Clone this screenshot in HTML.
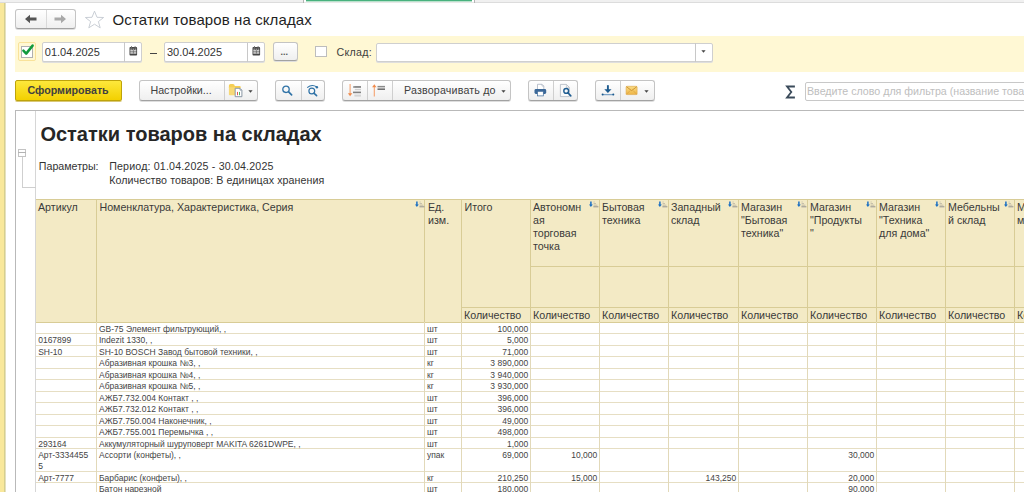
<!DOCTYPE html>
<html><head><meta charset="utf-8"><style>
html,body{margin:0;padding:0;}
body{width:1024px;height:492px;overflow:hidden;position:relative;background:#fff;font-family:"Liberation Sans", sans-serif;}
</style></head><body>
<div style="position:absolute;left:0px;top:0px;width:4px;height:492px;background:#f9e89b;"></div>
<div style="position:absolute;left:4px;top:0px;width:1px;height:492px;background:#d6cf8f;"></div>
<div style="position:absolute;left:5px;top:0px;width:1px;height:492px;background:#e6e1bd;"></div>
<div style="position:absolute;left:0px;top:0px;width:1024px;height:2px;background:#f0f0f0;"></div>
<div style="position:absolute;left:0px;top:2px;width:1024px;height:1px;background:#dcdcdc;"></div>
<div style="position:absolute;left:303px;top:0px;width:1px;height:3px;background:#b5b5b5;"></div>
<div style="position:absolute;left:304px;top:0px;width:170px;height:2px;background:#fff;"></div>
<div style="position:absolute;left:304px;top:2px;width:170px;height:1px;background:#e8e8e8;"></div>
<div style="position:absolute;left:474px;top:0px;width:1px;height:3px;background:#b5b5b5;"></div>
<div style="position:absolute;left:306px;top:0px;width:166px;height:1px;background:#48b17e;"></div>
<div style="position:absolute;left:306px;top:1px;width:166px;height:1px;background:#b9e2cc;"></div>
<div style="position:absolute;left:15px;top:9px;width:61px;height:20px;background:linear-gradient(#ffffff,#efefef);border:1px solid #c4c4c4;border-bottom-color:#a2a2a2;border-radius:3px;box-shadow:0 1px 0 #dedede;box-sizing:border-box;"></div>
<div style="position:absolute;left:45.5px;top:10px;width:1px;height:18px;background:#d9d9d9;"></div>
<svg style="position:absolute;left:24px;top:14.3px" width="14" height="10" viewBox="0 0 14 10"><path d="M1 5 L6 0.8 L6 3.6 L12.5 3.6 L12.5 6.4 L6 6.4 L6 9.2 Z" fill="#555"/></svg>
<svg style="position:absolute;left:53px;top:14.3px" width="14" height="10" viewBox="0 0 14 10"><path d="M13 5 L8 0.8 L8 3.6 L1.5 3.6 L1.5 6.4 L8 6.4 L8 9.2 Z" fill="#a9a9a9"/></svg>
<svg style="position:absolute;left:84px;top:10px" width="21" height="19" viewBox="0 0 21 19"><path d="M10.5 1.2 L13 7.3 L19.6 7.5 L14.4 11.6 L16.2 17.8 L10.5 14.2 L4.8 17.8 L6.6 11.6 L1.4 7.5 L8 7.3 Z" fill="none" stroke="#c3c8d0" stroke-width="0.9"/></svg>
<div style="position:absolute;left:112.60px;top:12.00px;font-size:15px;line-height:15px;white-space:pre;color:#1f1f1f;letter-spacing:0.1px;">Остатки товаров на складах</div>
<div style="position:absolute;left:15px;top:36px;width:1009px;height:36px;background:#fff8d4;"></div>
<div style="position:absolute;left:18px;top:42px;width:18px;height:18.5px;border:1.5px solid #f9e29a;border-radius:2px;box-sizing:border-box;background:#fff8d4;"></div>
<div style="position:absolute;left:21px;top:45.5px;width:12px;height:12px;border:1px solid #b0b0b0;box-sizing:border-box;background:#fff;"></div>
<svg style="position:absolute;left:21px;top:43px" width="14" height="14" viewBox="0 0 14 14"><path d="M2.4 7.6 L5.2 10.6 L11.6 2.6" fill="none" stroke="#119a3c" stroke-width="2.5" stroke-linecap="round" stroke-linejoin="round"/></svg>
<div style="position:absolute;left:42px;top:42px;width:99.5px;height:19.5px;background:#fff;border:1px solid #cfcfcf;border-radius:2px;box-shadow:0 1px 0 #dedede;box-sizing:border-box;"></div>
<div style="position:absolute;left:124px;top:42px;width:1px;height:19.5px;background:#c8c8c8;"></div>
<div style="position:absolute;left:44.80px;top:47.19px;font-size:11px;line-height:11px;white-space:pre;color:#333;">01.04.2025</div>
<svg style="position:absolute;left:129.0px;top:45.5px" width="9" height="10" viewBox="0 0 9 10"><rect x="0.5" y="1" width="7.6" height="8.5" rx="0.9" fill="#464646"/><rect x="1.4" y="2.7" width="1.5" height="0.9" fill="#c9c9c9"/><rect x="3.55" y="2.7" width="1.5" height="0.9" fill="#c9c9c9"/><rect x="5.7" y="2.7" width="1.5" height="0.9" fill="#c9c9c9"/><rect x="1.3" y="4.2" width="6" height="1.3" fill="#f2f2f2"/><rect x="1.3" y="6.3" width="6" height="1.3" fill="#f2f2f2"/><rect x="3.9" y="4.2" width="0.8" height="3.4" fill="#6a6a6a"/><rect x="2" y="0" width="1" height="1.5" fill="#888"/><rect x="5.6" y="0" width="1" height="1.5" fill="#888"/></svg>
<div style="position:absolute;left:150px;top:52.5px;width:6.5px;height:1.2px;background:#444;"></div>
<div style="position:absolute;left:164px;top:42px;width:100.5px;height:19.5px;background:#fff;border:1px solid #cfcfcf;border-radius:2px;box-shadow:0 1px 0 #dedede;box-sizing:border-box;"></div>
<div style="position:absolute;left:247px;top:42.5px;width:1px;height:19px;background:#c8c8c8;"></div>
<div style="position:absolute;left:167.00px;top:47.19px;font-size:11px;line-height:11px;white-space:pre;color:#333;">30.04.2025</div>
<svg style="position:absolute;left:252.0px;top:45.5px" width="9" height="10" viewBox="0 0 9 10"><rect x="0.5" y="1" width="7.6" height="8.5" rx="0.9" fill="#464646"/><rect x="1.4" y="2.7" width="1.5" height="0.9" fill="#c9c9c9"/><rect x="3.55" y="2.7" width="1.5" height="0.9" fill="#c9c9c9"/><rect x="5.7" y="2.7" width="1.5" height="0.9" fill="#c9c9c9"/><rect x="1.3" y="4.2" width="6" height="1.3" fill="#f2f2f2"/><rect x="1.3" y="6.3" width="6" height="1.3" fill="#f2f2f2"/><rect x="3.9" y="4.2" width="0.8" height="3.4" fill="#6a6a6a"/><rect x="2" y="0" width="1" height="1.5" fill="#888"/><rect x="5.6" y="0" width="1" height="1.5" fill="#888"/></svg>
<div style="position:absolute;left:273px;top:41.5px;width:24.5px;height:19.5px;background:linear-gradient(#ffffff,#efefef);border:1px solid #c4c4c4;border-bottom-color:#a2a2a2;border-radius:3px;box-shadow:0 1px 0 #dedede;box-sizing:border-box;"></div>
<div style="position:absolute;left:280.50px;top:47.98px;font-size:9px;line-height:9px;white-space:pre;color:#555;font-weight:bold;">...</div>
<div style="position:absolute;left:315.3px;top:45.7px;width:11.8px;height:11.8px;border:1px solid #bdbdbd;box-sizing:border-box;background:#fff;"></div>
<div style="position:absolute;left:336.50px;top:46.77px;font-size:10.67px;line-height:10.67px;white-space:pre;color:#404040;letter-spacing:0.3px;">Склад:</div>
<div style="position:absolute;left:375.5px;top:42.6px;width:337px;height:19px;background:#fff;border:1px solid #cfcfcf;border-radius:2px;box-shadow:0 1px 0 #dedede;box-sizing:border-box;"></div>
<div style="position:absolute;left:695px;top:42.6px;width:1px;height:19px;background:#c8c8c8;"></div>
<svg style="position:absolute;left:701.25px;top:49.5px" width="5" height="3" viewBox="0 0 5 3"><path d="M0.4 0.3 L4.6 0.3 L2.5 2.8 Z" fill="#444"/></svg>
<div style="position:absolute;left:15px;top:80px;width:106.6px;height:20.7px;background:linear-gradient(#fde83c,#f3d000);border:1px solid #bea30a;border-radius:2px;box-sizing:border-box;box-shadow:0 1px 0 #d9c877;"></div>
<div style="position:absolute;left:27.50px;top:84.87px;font-size:10.67px;line-height:10.67px;white-space:pre;color:#404040;font-weight:bold;">Сформировать</div>
<div style="position:absolute;left:138.5px;top:80.3px;width:119.5px;height:20.5px;background:linear-gradient(#ffffff,#efefef);border:1px solid #c4c4c4;border-bottom-color:#a2a2a2;border-radius:3px;box-shadow:0 1px 0 #dedede;box-sizing:border-box;"></div>
<div style="position:absolute;left:224px;top:81.3px;width:1px;height:18.5px;background:#cfcfcf;"></div>
<div style="position:absolute;left:150.50px;top:85.37px;font-size:10.67px;line-height:10.67px;white-space:pre;color:#404040;">Настройки...</div>
<svg style="position:absolute;left:228px;top:83px" width="16" height="15" viewBox="0 0 16 15"><path d="M0.9 2.6 Q0.9 0.9 2.6 0.9 L5 0.9 Q6.6 0.9 6.8 3 L11.6 3 Q12.7 3 12.7 4 L12.7 5 L0.9 5 Z" fill="#f5cf55"/><path d="M0.9 4.2 L7 4.2 L7 12.2 L1.8 12.2 Q0.9 12.2 0.9 11.3 Z" fill="#f7d976"/><path d="M7.2 5.3 L12 5.3 L13.9 7.2 L13.9 13.7 L7.2 13.7 Z" fill="#fff" stroke="#7e8b9b" stroke-width="0.9"/><path d="M12 5.3 L12 7.2 L13.9 7.2" fill="#c9d0d8" stroke="#7e8b9b" stroke-width="0.6"/><rect x="9" y="8.9" width="0.9" height="3.3" fill="#e0463c"/><rect x="11" y="8.9" width="0.9" height="3.3" fill="#3fae4f"/></svg>
<svg style="position:absolute;left:247.7px;top:90.1px" width="5" height="3" viewBox="0 0 5 3"><path d="M0.4 0.3 L4.6 0.3 L2.5 2.8 Z" fill="#444"/></svg>
<div style="position:absolute;left:275px;top:80.3px;width:49.69999999999999px;height:20.5px;background:linear-gradient(#ffffff,#efefef);border:1px solid #c4c4c4;border-bottom-color:#a2a2a2;border-radius:3px;box-shadow:0 1px 0 #dedede;box-sizing:border-box;"></div>
<div style="position:absolute;left:300.6px;top:81.3px;width:1px;height:18.5px;background:#cfcfcf;"></div>
<svg style="position:absolute;left:280px;top:83px" width="14" height="14" viewBox="0 0 14 14"><circle cx="6" cy="6.3" r="3.2" fill="none" stroke="#2f72a6" stroke-width="1.3"/><path d="M8.4 8.7 L11.6 11.8" stroke="#2f72a6" stroke-width="1.7" stroke-linecap="round"/></svg>
<svg style="position:absolute;left:305px;top:83px" width="16" height="14" viewBox="0 0 16 14"><circle cx="6.8" cy="8" r="2.9" fill="none" stroke="#2f72a6" stroke-width="1.2"/><path d="M8.9 10.2 L11.6 12.6" stroke="#2f72a6" stroke-width="1.6" stroke-linecap="round"/><path d="M2.2 4.6 Q7 0.8 11.8 4" fill="none" stroke="#2f72a6" stroke-width="1.1"/><circle cx="11.9" cy="4.2" r="1.2" fill="#2f72a6"/></svg>
<div style="position:absolute;left:342px;top:80.3px;width:169px;height:20.5px;background:linear-gradient(#ffffff,#efefef);border:1px solid #c4c4c4;border-bottom-color:#a2a2a2;border-radius:3px;box-shadow:0 1px 0 #dedede;box-sizing:border-box;"></div>
<div style="position:absolute;left:367px;top:81.3px;width:1px;height:18.5px;background:#cfcfcf;"></div>
<div style="position:absolute;left:392px;top:81.3px;width:1px;height:18.5px;background:#cfcfcf;"></div>
<svg style="position:absolute;left:346px;top:83px" width="16" height="15" viewBox="0 0 16 15"><path d="M4.1 1 L4.1 11" stroke="#f5a270" stroke-width="1.1"/><path d="M1.9 10.3 L6.3 10.3 L4.1 13.2 Z" fill="#f08a4b"/><rect x="7" y="3.1" width="8" height="1.7" fill="#808080"/><rect x="7" y="3.1" width="1.3" height="1.7" fill="#b5b5b5"/><rect x="8.8" y="5.9" width="6.2" height="1.3" fill="#cfcfcf"/><rect x="7" y="8.6" width="8" height="1.6" fill="#808080"/><rect x="8.4" y="11.6" width="6.6" height="2" fill="#d5d5d5"/></svg>
<svg style="position:absolute;left:370px;top:83px" width="16" height="15" viewBox="0 0 16 15"><path d="M4.3 3.5 L4.3 13.5" stroke="#f5a270" stroke-width="1.1"/><path d="M2.1 4.2 L6.5 4.2 L4.3 1.2 Z" fill="#f08a4b"/><rect x="7.5" y="2.9" width="7.5" height="1.5" fill="#8a8a8a"/><rect x="7.5" y="5.5" width="7.5" height="1.3" fill="#505050"/></svg>
<div style="position:absolute;left:404.00px;top:85.37px;font-size:10.67px;line-height:10.67px;white-space:pre;color:#404040;letter-spacing:0.18px;">Разворачивать до</div>
<svg style="position:absolute;left:500.8px;top:90.1px" width="5" height="3" viewBox="0 0 5 3"><path d="M0.4 0.3 L4.6 0.3 L2.5 2.8 Z" fill="#444"/></svg>
<div style="position:absolute;left:528.4px;top:80.3px;width:49.39999999999998px;height:20.5px;background:linear-gradient(#ffffff,#efefef);border:1px solid #c4c4c4;border-bottom-color:#a2a2a2;border-radius:3px;box-shadow:0 1px 0 #dedede;box-sizing:border-box;"></div>
<div style="position:absolute;left:553.4px;top:81.3px;width:1px;height:18.5px;background:#cfcfcf;"></div>
<svg style="position:absolute;left:533px;top:83px" width="15" height="15" viewBox="0 0 15 15"><path d="M4.5 1.3 L9 1.3 L10.8 3.1 L10.8 6.5 L4.5 6.5 Z" fill="#fff" stroke="#a9b3c0" stroke-width="0.8"/><path d="M9 1.3 L9 3.1 L10.8 3.1" fill="none" stroke="#a9b3c0" stroke-width="0.6"/><rect x="1.5" y="6" width="11.7" height="5" rx="1.4" fill="#3b6898"/><rect x="4.4" y="8.3" width="5.9" height="4.6" fill="#fff" stroke="#3b6898" stroke-width="0.7"/></svg>
<svg style="position:absolute;left:558px;top:83px" width="15" height="15" viewBox="0 0 15 15"><path d="M2.4 1.4 L8.4 1.4 L11.3 4.3 L11.3 13.6 L2.4 13.6 Z" fill="#fafafa" stroke="#b0b8c2" stroke-width="0.8"/><path d="M8.4 1.4 L8.4 4.3 L11.3 4.3" fill="none" stroke="#b0b8c2" stroke-width="0.6"/><circle cx="8.2" cy="7.9" r="2.4" fill="none" stroke="#1f5d91" stroke-width="1.4"/><path d="M9.9 9.7 L12.8 12.9" stroke="#1f5d91" stroke-width="1.6" stroke-linecap="round"/></svg>
<div style="position:absolute;left:595px;top:80.3px;width:59.5px;height:20.5px;background:linear-gradient(#ffffff,#efefef);border:1px solid #c4c4c4;border-bottom-color:#a2a2a2;border-radius:3px;box-shadow:0 1px 0 #dedede;box-sizing:border-box;"></div>
<div style="position:absolute;left:620px;top:81.3px;width:1px;height:18.5px;background:#cfcfcf;"></div>
<svg style="position:absolute;left:601px;top:84px" width="14" height="13" viewBox="0 0 14 13"><path d="M6.9 1.2 L6.9 6.5" stroke="#1c5a8e" stroke-width="1.9"/><path d="M3.3 5.2 L10.5 5.2 L6.9 9 Z" fill="#1c5a8e"/><path d="M1.6 10.6 L12.3 10.6" stroke="#7da3c6" stroke-width="1.3"/><circle cx="1.6" cy="10.6" r="1" fill="#1c5a8e"/><circle cx="12.3" cy="10.6" r="1" fill="#1c5a8e"/></svg>
<svg style="position:absolute;left:625px;top:85px" width="14" height="11" viewBox="0 0 14 11"><defs><linearGradient id="mg" x1="0" y1="0" x2="0" y2="1"><stop offset="0" stop-color="#f9dc85"/><stop offset="1" stop-color="#eeb445"/></linearGradient></defs><rect x="1.1" y="1.3" width="11" height="8.3" rx="0.9" fill="url(#mg)" stroke="#dca445" stroke-width="0.6"/><path d="M1.4 1.7 L6.6 5.6 L11.8 1.7" fill="none" stroke="#c99030" stroke-width="0.9"/><path d="M1.4 9.3 L5.2 5.5 M11.8 9.3 L8 5.5" fill="none" stroke="#d8a040" stroke-width="0.7"/></svg>
<svg style="position:absolute;left:643.9px;top:90.1px" width="5" height="3" viewBox="0 0 5 3"><path d="M0.4 0.3 L4.6 0.3 L2.5 2.8 Z" fill="#444"/></svg>
<svg style="position:absolute;left:785px;top:85px" width="11" height="14" viewBox="0 0 11 14"><path d="M9.9 1.5 L2 1.5 L6.3 7 L2 12.5 L9.9 12.5" fill="none" stroke="#3a4a5a" stroke-width="1.8" stroke-linejoin="miter"/></svg>
<div style="position:absolute;left:805.4px;top:82px;width:230px;height:18.6px;background:#fff;border:1px solid #c8c8c8;border-radius:2px;box-sizing:border-box;"></div>
<div style="position:absolute;left:807.00px;top:86.47px;font-size:10.67px;line-height:10.67px;white-space:pre;color:#bebebe;">Введите слово для фильтра (название товара</div>
<div style="position:absolute;left:15px;top:110px;width:1009px;height:1px;background:#b9b9b9;"></div>
<div style="position:absolute;left:15px;top:110px;width:1px;height:382px;background:#b9b9b9;"></div>
<div style="position:absolute;left:35px;top:111px;width:1px;height:381px;background:#d6d6d6;"></div>
<div style="position:absolute;left:18px;top:148.5px;width:7.5px;height:8.5px;border:1px solid #c3c3c3;box-sizing:border-box;background:#fff;"></div>
<div style="position:absolute;left:18px;top:152px;width:7.5px;height:1px;background:#b3b3b3;"></div>
<div style="position:absolute;left:21.5px;top:156.5px;width:1px;height:31px;background:#cfcfcf;"></div>
<div style="position:absolute;left:21.5px;top:187px;width:14px;height:1px;background:#cfcfcf;"></div>
<div style="position:absolute;left:40.40px;top:123.67px;font-size:20px;line-height:20px;white-space:pre;color:#262626;font-weight:bold;">Остатки товаров на складах</div>
<div style="position:absolute;left:38.80px;top:160.97px;font-size:10.67px;line-height:10.67px;white-space:pre;color:#333;">Параметры:</div>
<div style="position:absolute;left:109.20px;top:160.97px;font-size:10.67px;line-height:10.67px;white-space:pre;color:#333;letter-spacing:0.16px;">Период: 01.04.2025 - 30.04.2025</div>
<div style="position:absolute;left:109.20px;top:175.37px;font-size:10.67px;line-height:10.67px;white-space:pre;color:#333;letter-spacing:0.07px;">Количество товаров: В единицах хранения</div>
<div style="position:absolute;left:36px;top:199px;width:988px;height:123px;background:#f3eac5;"></div>
<div style="position:absolute;left:36px;top:199px;width:988px;height:1px;background:#d8cc96;"></div>
<div style="position:absolute;left:530.6px;top:266px;width:493.4px;height:1px;background:#d8cc96;"></div>
<div style="position:absolute;left:461.6px;top:307px;width:562.4px;height:1px;background:#d8cc96;"></div>
<div style="position:absolute;left:36px;top:322px;width:988px;height:1px;background:#d8cc96;"></div>
<div style="position:absolute;left:36px;top:333px;width:988px;height:1px;background:#e6dec3;"></div>
<div style="position:absolute;left:36px;top:345px;width:988px;height:1px;background:#e6dec3;"></div>
<div style="position:absolute;left:36px;top:356px;width:988px;height:1px;background:#e6dec3;"></div>
<div style="position:absolute;left:36px;top:368px;width:988px;height:1px;background:#e6dec3;"></div>
<div style="position:absolute;left:36px;top:379px;width:988px;height:1px;background:#e6dec3;"></div>
<div style="position:absolute;left:36px;top:391px;width:988px;height:1px;background:#e6dec3;"></div>
<div style="position:absolute;left:36px;top:402px;width:988px;height:1px;background:#e6dec3;"></div>
<div style="position:absolute;left:36px;top:414px;width:988px;height:1px;background:#e6dec3;"></div>
<div style="position:absolute;left:36px;top:425px;width:988px;height:1px;background:#e6dec3;"></div>
<div style="position:absolute;left:36px;top:437px;width:988px;height:1px;background:#e6dec3;"></div>
<div style="position:absolute;left:36px;top:448px;width:988px;height:1px;background:#e6dec3;"></div>
<div style="position:absolute;left:36px;top:471px;width:988px;height:1px;background:#e6dec3;"></div>
<div style="position:absolute;left:36px;top:482px;width:988px;height:1px;background:#e6dec3;"></div>
<div style="position:absolute;left:36px;top:493px;width:988px;height:1px;background:#e6dec3;"></div>
<div style="position:absolute;left:96px;top:199px;width:1px;height:123px;background:#d8cc96;"></div>
<div style="position:absolute;left:96px;top:322px;width:1px;height:170px;background:#e2d9b9;"></div>
<div style="position:absolute;left:424px;top:199px;width:1px;height:123px;background:#d8cc96;"></div>
<div style="position:absolute;left:424px;top:322px;width:1px;height:170px;background:#e2d9b9;"></div>
<div style="position:absolute;left:461px;top:199px;width:1px;height:123px;background:#d8cc96;"></div>
<div style="position:absolute;left:461px;top:322px;width:1px;height:170px;background:#e2d9b9;"></div>
<div style="position:absolute;left:530px;top:199px;width:1px;height:123px;background:#d8cc96;"></div>
<div style="position:absolute;left:530px;top:322px;width:1px;height:170px;background:#e2d9b9;"></div>
<div style="position:absolute;left:599px;top:199px;width:1px;height:123px;background:#d8cc96;"></div>
<div style="position:absolute;left:599px;top:322px;width:1px;height:170px;background:#e2d9b9;"></div>
<div style="position:absolute;left:668px;top:199px;width:1px;height:123px;background:#d8cc96;"></div>
<div style="position:absolute;left:668px;top:322px;width:1px;height:170px;background:#e2d9b9;"></div>
<div style="position:absolute;left:738px;top:199px;width:1px;height:123px;background:#d8cc96;"></div>
<div style="position:absolute;left:738px;top:322px;width:1px;height:170px;background:#e2d9b9;"></div>
<div style="position:absolute;left:807px;top:199px;width:1px;height:123px;background:#d8cc96;"></div>
<div style="position:absolute;left:807px;top:322px;width:1px;height:170px;background:#e2d9b9;"></div>
<div style="position:absolute;left:876px;top:199px;width:1px;height:123px;background:#d8cc96;"></div>
<div style="position:absolute;left:876px;top:322px;width:1px;height:170px;background:#e2d9b9;"></div>
<div style="position:absolute;left:945px;top:199px;width:1px;height:123px;background:#d8cc96;"></div>
<div style="position:absolute;left:945px;top:322px;width:1px;height:170px;background:#e2d9b9;"></div>
<div style="position:absolute;left:1014px;top:199px;width:1px;height:123px;background:#d8cc96;"></div>
<div style="position:absolute;left:1014px;top:322px;width:1px;height:170px;background:#e2d9b9;"></div>
<div style="position:absolute;left:38.00px;top:201.97px;font-size:10.67px;line-height:10.67px;white-space:pre;color:#3a3a3a;">Артикул</div>
<div style="position:absolute;left:99.50px;top:201.97px;font-size:10.67px;line-height:10.67px;white-space:pre;color:#3a3a3a;">Номенклатура, Характеристика, Серия</div>
<div style="position:absolute;left:428.00px;top:201.97px;font-size:10.67px;line-height:10.67px;white-space:pre;color:#3a3a3a;">Ед.</div>
<div style="position:absolute;left:428.00px;top:214.97px;font-size:10.67px;line-height:10.67px;white-space:pre;color:#3a3a3a;">изм.</div>
<div style="position:absolute;left:464.50px;top:201.97px;font-size:10.67px;line-height:10.67px;white-space:pre;color:#3a3a3a;">Итого</div>
<div style="position:absolute;left:533.00px;top:201.97px;font-size:10.67px;line-height:10.67px;white-space:pre;color:#3a3a3a;">Автономн</div>
<div style="position:absolute;left:533.00px;top:214.97px;font-size:10.67px;line-height:10.67px;white-space:pre;color:#3a3a3a;">ая</div>
<div style="position:absolute;left:533.00px;top:227.97px;font-size:10.67px;line-height:10.67px;white-space:pre;color:#3a3a3a;">торговая</div>
<div style="position:absolute;left:533.00px;top:240.97px;font-size:10.67px;line-height:10.67px;white-space:pre;color:#3a3a3a;">точка</div>
<div style="position:absolute;left:602.00px;top:201.97px;font-size:10.67px;line-height:10.67px;white-space:pre;color:#3a3a3a;">Бытовая</div>
<div style="position:absolute;left:602.00px;top:214.97px;font-size:10.67px;line-height:10.67px;white-space:pre;color:#3a3a3a;">техника</div>
<div style="position:absolute;left:671.00px;top:201.97px;font-size:10.67px;line-height:10.67px;white-space:pre;color:#3a3a3a;">Западный</div>
<div style="position:absolute;left:671.00px;top:214.97px;font-size:10.67px;line-height:10.67px;white-space:pre;color:#3a3a3a;">склад</div>
<div style="position:absolute;left:741.00px;top:201.97px;font-size:10.67px;line-height:10.67px;white-space:pre;color:#3a3a3a;">Магазин</div>
<div style="position:absolute;left:741.00px;top:214.97px;font-size:10.67px;line-height:10.67px;white-space:pre;color:#3a3a3a;">"Бытовая</div>
<div style="position:absolute;left:741.00px;top:227.97px;font-size:10.67px;line-height:10.67px;white-space:pre;color:#3a3a3a;">техника"</div>
<div style="position:absolute;left:810.00px;top:201.97px;font-size:10.67px;line-height:10.67px;white-space:pre;color:#3a3a3a;">Магазин</div>
<div style="position:absolute;left:810.00px;top:214.97px;font-size:10.67px;line-height:10.67px;white-space:pre;color:#3a3a3a;">"Продукты</div>
<div style="position:absolute;left:810.00px;top:227.97px;font-size:10.67px;line-height:10.67px;white-space:pre;color:#3a3a3a;">"</div>
<div style="position:absolute;left:879.00px;top:201.97px;font-size:10.67px;line-height:10.67px;white-space:pre;color:#3a3a3a;">Магазин</div>
<div style="position:absolute;left:879.00px;top:214.97px;font-size:10.67px;line-height:10.67px;white-space:pre;color:#3a3a3a;">"Техника</div>
<div style="position:absolute;left:879.00px;top:227.97px;font-size:10.67px;line-height:10.67px;white-space:pre;color:#3a3a3a;">для дома"</div>
<div style="position:absolute;left:948.00px;top:201.97px;font-size:10.67px;line-height:10.67px;white-space:pre;color:#3a3a3a;">Мебельны</div>
<div style="position:absolute;left:948.00px;top:214.97px;font-size:10.67px;line-height:10.67px;white-space:pre;color:#3a3a3a;">й склад</div>
<div style="position:absolute;left:1017.00px;top:201.97px;font-size:10.67px;line-height:10.67px;white-space:pre;color:#3a3a3a;">Магазин</div>
<div style="position:absolute;left:1017.00px;top:214.97px;font-size:10.67px;line-height:10.67px;white-space:pre;color:#3a3a3a;">мебели</div>
<svg style="position:absolute;left:415px;top:201px" width="10" height="7" viewBox="0 0 10 7"><path d="M1.9 0.6 L1.9 4" stroke="#1b6fc2" stroke-width="1.5"/><path d="M0 3.4 L3.8 3.4 L1.9 6.1 Z" fill="#1b6fc2"/><path d="M4.6 1 L5.6 1 M4.6 2.6 L7 2.6 M4.6 4.2 L8.4 4.2" stroke="#b5b0a0" stroke-width="0.8"/><path d="M4.4 5.8 L9.4 5.8" stroke="#888" stroke-width="0.9"/></svg>
<svg style="position:absolute;left:589px;top:201px" width="10" height="7" viewBox="0 0 10 7"><path d="M1.9 0.6 L1.9 4" stroke="#1b6fc2" stroke-width="1.5"/><path d="M0 3.4 L3.8 3.4 L1.9 6.1 Z" fill="#1b6fc2"/><path d="M4.6 1 L5.6 1 M4.6 2.6 L7 2.6 M4.6 4.2 L8.4 4.2" stroke="#b5b0a0" stroke-width="0.8"/><path d="M4.4 5.8 L9.4 5.8" stroke="#888" stroke-width="0.9"/></svg>
<svg style="position:absolute;left:658px;top:201px" width="10" height="7" viewBox="0 0 10 7"><path d="M1.9 0.6 L1.9 4" stroke="#1b6fc2" stroke-width="1.5"/><path d="M0 3.4 L3.8 3.4 L1.9 6.1 Z" fill="#1b6fc2"/><path d="M4.6 1 L5.6 1 M4.6 2.6 L7 2.6 M4.6 4.2 L8.4 4.2" stroke="#b5b0a0" stroke-width="0.8"/><path d="M4.4 5.8 L9.4 5.8" stroke="#888" stroke-width="0.9"/></svg>
<svg style="position:absolute;left:728px;top:201px" width="10" height="7" viewBox="0 0 10 7"><path d="M1.9 0.6 L1.9 4" stroke="#1b6fc2" stroke-width="1.5"/><path d="M0 3.4 L3.8 3.4 L1.9 6.1 Z" fill="#1b6fc2"/><path d="M4.6 1 L5.6 1 M4.6 2.6 L7 2.6 M4.6 4.2 L8.4 4.2" stroke="#b5b0a0" stroke-width="0.8"/><path d="M4.4 5.8 L9.4 5.8" stroke="#888" stroke-width="0.9"/></svg>
<svg style="position:absolute;left:797px;top:201px" width="10" height="7" viewBox="0 0 10 7"><path d="M1.9 0.6 L1.9 4" stroke="#1b6fc2" stroke-width="1.5"/><path d="M0 3.4 L3.8 3.4 L1.9 6.1 Z" fill="#1b6fc2"/><path d="M4.6 1 L5.6 1 M4.6 2.6 L7 2.6 M4.6 4.2 L8.4 4.2" stroke="#b5b0a0" stroke-width="0.8"/><path d="M4.4 5.8 L9.4 5.8" stroke="#888" stroke-width="0.9"/></svg>
<svg style="position:absolute;left:866px;top:201px" width="10" height="7" viewBox="0 0 10 7"><path d="M1.9 0.6 L1.9 4" stroke="#1b6fc2" stroke-width="1.5"/><path d="M0 3.4 L3.8 3.4 L1.9 6.1 Z" fill="#1b6fc2"/><path d="M4.6 1 L5.6 1 M4.6 2.6 L7 2.6 M4.6 4.2 L8.4 4.2" stroke="#b5b0a0" stroke-width="0.8"/><path d="M4.4 5.8 L9.4 5.8" stroke="#888" stroke-width="0.9"/></svg>
<svg style="position:absolute;left:935px;top:201px" width="10" height="7" viewBox="0 0 10 7"><path d="M1.9 0.6 L1.9 4" stroke="#1b6fc2" stroke-width="1.5"/><path d="M0 3.4 L3.8 3.4 L1.9 6.1 Z" fill="#1b6fc2"/><path d="M4.6 1 L5.6 1 M4.6 2.6 L7 2.6 M4.6 4.2 L8.4 4.2" stroke="#b5b0a0" stroke-width="0.8"/><path d="M4.4 5.8 L9.4 5.8" stroke="#888" stroke-width="0.9"/></svg>
<svg style="position:absolute;left:1004px;top:201px" width="10" height="7" viewBox="0 0 10 7"><path d="M1.9 0.6 L1.9 4" stroke="#1b6fc2" stroke-width="1.5"/><path d="M0 3.4 L3.8 3.4 L1.9 6.1 Z" fill="#1b6fc2"/><path d="M4.6 1 L5.6 1 M4.6 2.6 L7 2.6 M4.6 4.2 L8.4 4.2" stroke="#b5b0a0" stroke-width="0.8"/><path d="M4.4 5.8 L9.4 5.8" stroke="#888" stroke-width="0.9"/></svg>
<div style="position:absolute;left:464.00px;top:309.87px;font-size:10.67px;line-height:10.67px;white-space:pre;color:#3a3a3a;">Количество</div>
<div style="position:absolute;left:533.00px;top:309.87px;font-size:10.67px;line-height:10.67px;white-space:pre;color:#3a3a3a;">Количество</div>
<div style="position:absolute;left:602.00px;top:309.87px;font-size:10.67px;line-height:10.67px;white-space:pre;color:#3a3a3a;">Количество</div>
<div style="position:absolute;left:671.00px;top:309.87px;font-size:10.67px;line-height:10.67px;white-space:pre;color:#3a3a3a;">Количество</div>
<div style="position:absolute;left:741.00px;top:309.87px;font-size:10.67px;line-height:10.67px;white-space:pre;color:#3a3a3a;">Количество</div>
<div style="position:absolute;left:810.00px;top:309.87px;font-size:10.67px;line-height:10.67px;white-space:pre;color:#3a3a3a;">Количество</div>
<div style="position:absolute;left:879.00px;top:309.87px;font-size:10.67px;line-height:10.67px;white-space:pre;color:#3a3a3a;">Количество</div>
<div style="position:absolute;left:948.00px;top:309.87px;font-size:10.67px;line-height:10.67px;white-space:pre;color:#3a3a3a;">Количество</div>
<div style="position:absolute;left:1017.00px;top:309.87px;font-size:10.67px;line-height:10.67px;white-space:pre;color:#3a3a3a;">Количество</div>
<div style="position:absolute;left:99.00px;top:324.80px;font-size:8.5px;line-height:8.5px;white-space:pre;color:#444;">GB-75 Элемент фильтрующий, ,</div>
<div style="position:absolute;left:427.00px;top:324.80px;font-size:8.5px;line-height:8.5px;white-space:pre;color:#444;">шт</div>
<div style="position:absolute;left:461px;top:324.80px;width:67.20px;text-align:right;font-size:8.5px;line-height:8.5px;white-space:pre;color:#444;">100,000</div>
<div style="position:absolute;left:38.20px;top:335.80px;font-size:8.5px;line-height:8.5px;white-space:pre;color:#444;">0167899</div>
<div style="position:absolute;left:99.00px;top:335.80px;font-size:8.5px;line-height:8.5px;white-space:pre;color:#444;">Indezit 1330, ,</div>
<div style="position:absolute;left:427.00px;top:335.80px;font-size:8.5px;line-height:8.5px;white-space:pre;color:#444;">шт</div>
<div style="position:absolute;left:461px;top:335.80px;width:67.20px;text-align:right;font-size:8.5px;line-height:8.5px;white-space:pre;color:#444;">5,000</div>
<div style="position:absolute;left:38.20px;top:347.80px;font-size:8.5px;line-height:8.5px;white-space:pre;color:#444;">SH-10</div>
<div style="position:absolute;left:99.00px;top:347.80px;font-size:8.5px;line-height:8.5px;white-space:pre;color:#444;">SH-10 BOSCH Завод бытовой техники, ,</div>
<div style="position:absolute;left:427.00px;top:347.80px;font-size:8.5px;line-height:8.5px;white-space:pre;color:#444;">шт</div>
<div style="position:absolute;left:461px;top:347.80px;width:67.20px;text-align:right;font-size:8.5px;line-height:8.5px;white-space:pre;color:#444;">71,000</div>
<div style="position:absolute;left:99.00px;top:358.80px;font-size:8.5px;line-height:8.5px;white-space:pre;color:#444;">Абразивная крошка №3, ,</div>
<div style="position:absolute;left:427.00px;top:358.80px;font-size:8.5px;line-height:8.5px;white-space:pre;color:#444;">кг</div>
<div style="position:absolute;left:461px;top:358.80px;width:67.20px;text-align:right;font-size:8.5px;line-height:8.5px;white-space:pre;color:#444;">3 890,000</div>
<div style="position:absolute;left:99.00px;top:370.80px;font-size:8.5px;line-height:8.5px;white-space:pre;color:#444;">Абразивная крошка №4, ,</div>
<div style="position:absolute;left:427.00px;top:370.80px;font-size:8.5px;line-height:8.5px;white-space:pre;color:#444;">кг</div>
<div style="position:absolute;left:461px;top:370.80px;width:67.20px;text-align:right;font-size:8.5px;line-height:8.5px;white-space:pre;color:#444;">3 940,000</div>
<div style="position:absolute;left:99.00px;top:381.80px;font-size:8.5px;line-height:8.5px;white-space:pre;color:#444;">Абразивная крошка №5, ,</div>
<div style="position:absolute;left:427.00px;top:381.80px;font-size:8.5px;line-height:8.5px;white-space:pre;color:#444;">кг</div>
<div style="position:absolute;left:461px;top:381.80px;width:67.20px;text-align:right;font-size:8.5px;line-height:8.5px;white-space:pre;color:#444;">3 930,000</div>
<div style="position:absolute;left:99.00px;top:393.80px;font-size:8.5px;line-height:8.5px;white-space:pre;color:#444;">АЖБ7.732.004 Контакт , ,</div>
<div style="position:absolute;left:427.00px;top:393.80px;font-size:8.5px;line-height:8.5px;white-space:pre;color:#444;">шт</div>
<div style="position:absolute;left:461px;top:393.80px;width:67.20px;text-align:right;font-size:8.5px;line-height:8.5px;white-space:pre;color:#444;">396,000</div>
<div style="position:absolute;left:99.00px;top:404.80px;font-size:8.5px;line-height:8.5px;white-space:pre;color:#444;">АЖБ7.732.012 Контакт , ,</div>
<div style="position:absolute;left:427.00px;top:404.80px;font-size:8.5px;line-height:8.5px;white-space:pre;color:#444;">шт</div>
<div style="position:absolute;left:461px;top:404.80px;width:67.20px;text-align:right;font-size:8.5px;line-height:8.5px;white-space:pre;color:#444;">396,000</div>
<div style="position:absolute;left:99.00px;top:416.80px;font-size:8.5px;line-height:8.5px;white-space:pre;color:#444;">АЖБ7.750.004 Наконечник, ,</div>
<div style="position:absolute;left:427.00px;top:416.80px;font-size:8.5px;line-height:8.5px;white-space:pre;color:#444;">шт</div>
<div style="position:absolute;left:461px;top:416.80px;width:67.20px;text-align:right;font-size:8.5px;line-height:8.5px;white-space:pre;color:#444;">49,000</div>
<div style="position:absolute;left:99.00px;top:427.80px;font-size:8.5px;line-height:8.5px;white-space:pre;color:#444;">АЖБ7.755.001 Перемычка , ,</div>
<div style="position:absolute;left:427.00px;top:427.80px;font-size:8.5px;line-height:8.5px;white-space:pre;color:#444;">шт</div>
<div style="position:absolute;left:461px;top:427.80px;width:67.20px;text-align:right;font-size:8.5px;line-height:8.5px;white-space:pre;color:#444;">498,000</div>
<div style="position:absolute;left:38.20px;top:439.80px;font-size:8.5px;line-height:8.5px;white-space:pre;color:#444;">293164</div>
<div style="position:absolute;left:99.00px;top:439.80px;font-size:8.5px;line-height:8.5px;white-space:pre;color:#444;">Аккумуляторный шуруповерт MAKITA 6261DWPE, ,</div>
<div style="position:absolute;left:427.00px;top:439.80px;font-size:8.5px;line-height:8.5px;white-space:pre;color:#444;">шт</div>
<div style="position:absolute;left:461px;top:439.80px;width:67.20px;text-align:right;font-size:8.5px;line-height:8.5px;white-space:pre;color:#444;">1,000</div>
<div style="position:absolute;left:38.20px;top:450.80px;font-size:8.5px;line-height:8.5px;white-space:pre;color:#444;">Арт-3334455</div>
<div style="position:absolute;left:38.20px;top:461.80px;font-size:8.5px;line-height:8.5px;white-space:pre;color:#444;">5</div>
<div style="position:absolute;left:99.00px;top:450.80px;font-size:8.5px;line-height:8.5px;white-space:pre;color:#444;">Ассорти (конфеты), ,</div>
<div style="position:absolute;left:427.00px;top:450.80px;font-size:8.5px;line-height:8.5px;white-space:pre;color:#444;">упак</div>
<div style="position:absolute;left:461px;top:450.80px;width:67.20px;text-align:right;font-size:8.5px;line-height:8.5px;white-space:pre;color:#444;">69,000</div>
<div style="position:absolute;left:530px;top:450.80px;width:67.20px;text-align:right;font-size:8.5px;line-height:8.5px;white-space:pre;color:#444;">10,000</div>
<div style="position:absolute;left:807px;top:450.80px;width:67.20px;text-align:right;font-size:8.5px;line-height:8.5px;white-space:pre;color:#444;">30,000</div>
<div style="position:absolute;left:38.20px;top:473.80px;font-size:8.5px;line-height:8.5px;white-space:pre;color:#444;">Арт-7777</div>
<div style="position:absolute;left:99.00px;top:473.80px;font-size:8.5px;line-height:8.5px;white-space:pre;color:#444;">Барбарис (конфеты), ,</div>
<div style="position:absolute;left:427.00px;top:473.80px;font-size:8.5px;line-height:8.5px;white-space:pre;color:#444;">кг</div>
<div style="position:absolute;left:461px;top:473.80px;width:67.20px;text-align:right;font-size:8.5px;line-height:8.5px;white-space:pre;color:#444;">210,250</div>
<div style="position:absolute;left:530px;top:473.80px;width:67.20px;text-align:right;font-size:8.5px;line-height:8.5px;white-space:pre;color:#444;">15,000</div>
<div style="position:absolute;left:668px;top:473.80px;width:68.20px;text-align:right;font-size:8.5px;line-height:8.5px;white-space:pre;color:#444;">143,250</div>
<div style="position:absolute;left:807px;top:473.80px;width:67.20px;text-align:right;font-size:8.5px;line-height:8.5px;white-space:pre;color:#444;">20,000</div>
<div style="position:absolute;left:99.00px;top:484.80px;font-size:8.5px;line-height:8.5px;white-space:pre;color:#444;">Батон нарезной</div>
<div style="position:absolute;left:427.00px;top:484.80px;font-size:8.5px;line-height:8.5px;white-space:pre;color:#444;">шт</div>
<div style="position:absolute;left:461px;top:484.80px;width:67.20px;text-align:right;font-size:8.5px;line-height:8.5px;white-space:pre;color:#444;">180,000</div>
<div style="position:absolute;left:807px;top:484.80px;width:67.20px;text-align:right;font-size:8.5px;line-height:8.5px;white-space:pre;color:#444;">90,000</div>
</body></html>
